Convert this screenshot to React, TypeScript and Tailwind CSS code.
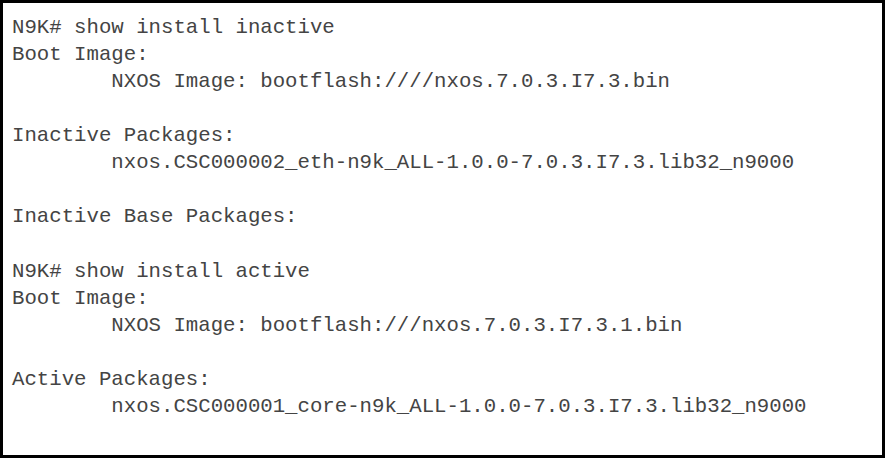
import React from "react";

const lines = [
  "N9K# show install inactive",
  "Boot Image:",
  "        NXOS Image: bootflash:////nxos.7.0.3.I7.3.bin",
  "",
  "Inactive Packages:",
  "        nxos.CSC000002_eth-n9k_ALL-1.0.0-7.0.3.I7.3.lib32_n9000",
  "",
  "Inactive Base Packages:",
  "",
  "N9K# show install active",
  "Boot Image:",
  "        NXOS Image: bootflash:///nxos.7.0.3.I7.3.1.bin",
  "",
  "Active Packages:",
  "        nxos.CSC000001_core-n9k_ALL-1.0.0-7.0.3.I7.3.lib32_n9000",
];

export default function App() {
  return (
    <div className="w-[885px] h-[461px] bg-white">
      <div className="w-[885px] h-[458px] border-[3px] border-black bg-white pl-[9px] pt-[11px]">
        <pre className="font-['Courier_New','Liberation_Mono',monospace] text-[20.7px] leading-[27.07px] text-[#444444] whitespace-pre m-0">
          {lines.map((line, i) => (
            <div key={i} className="h-[27.07px]">
              {line}
            </div>
          ))}
        </pre>
      </div>
    </div>
  );
}
